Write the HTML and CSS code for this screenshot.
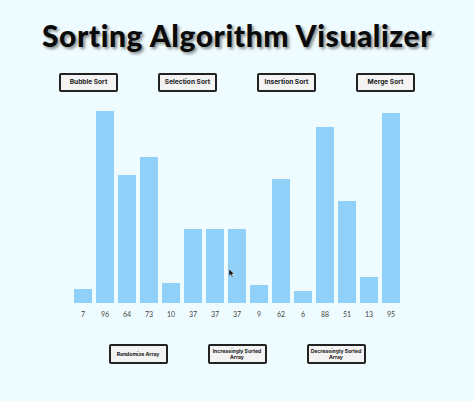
FILE: index.html
```html
<!DOCTYPE html>
<html lang="en">
<head>
<meta charset="utf-8">
<title>Sorting Algorithm Visualizer</title>
<link rel="stylesheet" href="styles.css">
</head>
<body>
<div class="page">
  <h1 class="title">Sorting Algorithm Visualizer</h1>
  <div class="btn-row top-row">
    <button class="btn">Bubble Sort</button>
    <button class="btn">Selection Sort</button>
    <button class="btn">Insertion Sort</button>
    <button class="btn">Merge Sort</button>
  </div>
  <div class="chart">
    <div class="bars">
      <div class="bar" style="height:14px"></div>
      <div class="bar" style="height:192px"></div>
      <div class="bar" style="height:128px"></div>
      <div class="bar" style="height:146px"></div>
      <div class="bar" style="height:20px"></div>
      <div class="bar" style="height:74px"></div>
      <div class="bar" style="height:74px"></div>
      <div class="bar" style="height:74px"></div>
      <div class="bar" style="height:18px"></div>
      <div class="bar" style="height:124px"></div>
      <div class="bar" style="height:12px"></div>
      <div class="bar" style="height:176px"></div>
      <div class="bar" style="height:102px"></div>
      <div class="bar" style="height:26px"></div>
      <div class="bar" style="height:190px"></div>
    </div>
    <div class="labels">
      <span class="label">7</span>
      <span class="label">96</span>
      <span class="label">64</span>
      <span class="label">73</span>
      <span class="label">10</span>
      <span class="label">37</span>
      <span class="label">37</span>
      <span class="label">37</span>
      <span class="label">9</span>
      <span class="label">62</span>
      <span class="label">6</span>
      <span class="label">88</span>
      <span class="label">51</span>
      <span class="label">13</span>
      <span class="label">95</span>
    </div>
    <svg class="cursor" width="6" height="9" viewBox="0 0 6 9"><path d="M0 0 L0 7 L1.8 5.4 L3 8.5 L4 8 L2.9 5 L5.2 5 Z" fill="#111" stroke="#fff" stroke-width="0.4"/></svg>
  </div>
  <div class="btn-row bottom-row">
    <button class="btn small">Randomize Array</button>
    <button class="btn small">Increasingly Sorted Array</button>
    <button class="btn small">Decreasingly Sorted Array</button>
  </div>
</div>
</body>
</html>
```

FILE: styles.css
```css
html, body {
  margin: 0;
  padding: 0;
  background: #effcff;
}

.page {
  width: 474px;
  height: 401px;
  font-family: Lato, "Noto Sans", "Liberation Sans", sans-serif;
  color: #111;
}

.title {
  margin: 0;
  padding-top: 17px;
  font-size: 30px;
  font-weight: 900;
  line-height: 36px;
  text-align: center;
  color: #0a0a0a;
  letter-spacing: 0.55px;
  text-shadow: 2px 2px 3px rgba(0, 0, 0, 0.45);
}

.btn-row {
  display: flex;
  justify-content: center;
  gap: 40px;
}

.top-row {
  margin-top: 20px;
}

.btn {
  box-sizing: border-box;
  width: 59px;
  height: 19px;
  padding: 0 1px;
  border: 2px solid #222;
  border-radius: 2px;
  background: #f4f3f4;
  font-family: Inter, "Liberation Sans", sans-serif;
  font-weight: 700;
  font-size: 6.6px;
  line-height: 7px;
  color: #1a1a1a;
  text-align: center;
}

.btn.small {
  height: 20px;
  padding: 0;
  font-size: 5.1px;
  line-height: 6.5px;
}

.chart {
  position: relative;
  margin-top: 11px;
}

.bars {
  display: flex;
  justify-content: center;
  align-items: flex-end;
  height: 200px;
}

.bar {
  width: 18px;
  margin: 0 2px;
  background: #91d1f9;
}

.labels {
  display: flex;
  justify-content: center;
  margin-top: 6px;
}

.label {
  width: 22px;
  text-align: center;
  font-size: 7px;
  line-height: 10px;
  color: #444;
}

.cursor {
  position: absolute;
  left: 229px;
  top: 166px;
}

.bottom-row {
  margin-top: 25px;
}
```
